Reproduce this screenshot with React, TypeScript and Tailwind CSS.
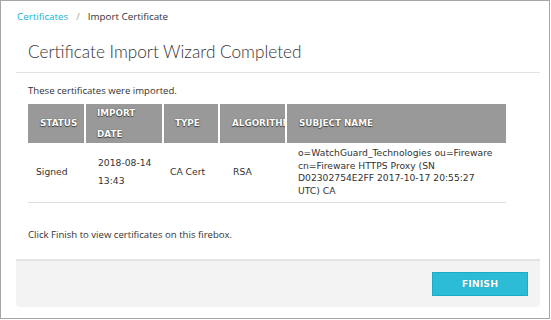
const subject = 'o=WatchGuard_Technologies ou=Fireware cn=Fireware HTTPS Proxy (SN D02302754E2FF 2017-10-17 20:55:27 UTC) CA';

const headerText = 'text-white text-[8.8px] font-bold [text-shadow:0_0_1px_#333,0_1px_1px_#444]';

const App = () => {
  return (
    <div className="w-[551px] h-[320px] bg-white">
      <div className="w-[550px] h-[319px] border border-[#a6a6a6] flex flex-col font-['Open_Sans',sans-serif]">
        <div className="pt-[8px] pl-[16px] text-[9.8px] leading-[15px] flex gap-[8px]">
          <span className="text-[#20b2d0]">Certificates</span>
          <span className="text-[#aaa]">/</span>
          <span className="text-[#333]">Import Certificate</span>
        </div>

        <div className="ml-[15px] mr-[9px] flex-1 flex flex-col">
          <h1 className="pt-[16px] pl-[12px] pb-[8px] text-[17.2px] leading-[24px] font-light text-[#333] font-['Lato',sans-serif] border-b border-[#e3e3e3]">
            Certificate Import Wizard Completed
          </h1>

          <p className="pl-[12px] pt-[11px] text-[9.6px] leading-[14px] text-[#333]">These certificates were imported.</p>

          <div className="pl-[12px] pr-[34px] pt-[6px]">
            <table className="w-full border-collapse table-fixed font-['DejaVu_Sans',sans-serif] text-[9.2px]">
              <colgroup>
                <col className="w-[57px]" />
                <col className="w-[78px]" />
                <col className="w-[56px]" />
                <col className="w-[67px]" />
                <col />
              </colgroup>
              <thead>
                <tr className="bg-[#999] h-[39px]">
                  <th className={`text-left pl-[12px] border-r-2 border-white ${headerText} overflow-hidden whitespace-nowrap`}>STATUS</th>
                  <th className={`text-left pl-[11px] border-r-2 border-white ${headerText}`}>
                    <div className="h-[39px] flex flex-col justify-center leading-[21px]">
                      <span>IMPORT</span>
                      <span>DATE</span>
                    </div>
                  </th>
                  <th className={`text-left pl-[11px] border-r-2 border-white ${headerText}`}>TYPE</th>
                  <th className={`text-left pl-[12px] border-r-2 border-white ${headerText} overflow-hidden whitespace-nowrap`}>ALGORITHM</th>
                  <th className={`text-left pl-[12px] ${headerText}`}>SUBJECT NAME</th>
                </tr>
              </thead>
              <tbody>
                <tr className="h-[59px] border-b border-[#ddd] text-[#333] align-middle">
                  <td className="pl-[8px]">Signed</td>
                  <td className="pl-[13px] leading-[18px]">2018-08-14<br />13:43</td>
                  <td className="pl-[7px]">CA Cert</td>
                  <td className="pl-[14px]">RSA</td>
                  <td className="pl-[12px] pr-[10px] leading-[12.5px]">{subject}</td>
                </tr>
              </tbody>
            </table>
          </div>

          <p className="pl-[12px] pt-[25px] text-[9.6px] leading-[14px] text-[#333]">Click Finish to view certificates on this firebox.</p>

          <div className="mt-auto mb-[11px] h-[48px] bg-[#f3f3f3] border-t-2 border-[#e3e3e3] rounded-b-[4px] flex items-center justify-end pr-[12px]">
            <button className="w-[96px] h-[24px] bg-[#2dbcd6] border border-[#1ea9c6] text-white text-[9.5px] font-bold font-['DejaVu_Sans',sans-serif] [text-shadow:0_0_1px_#1a7f94]">
              FINISH
            </button>
          </div>
        </div>
      </div>
    </div>
  );
};

export default App;
